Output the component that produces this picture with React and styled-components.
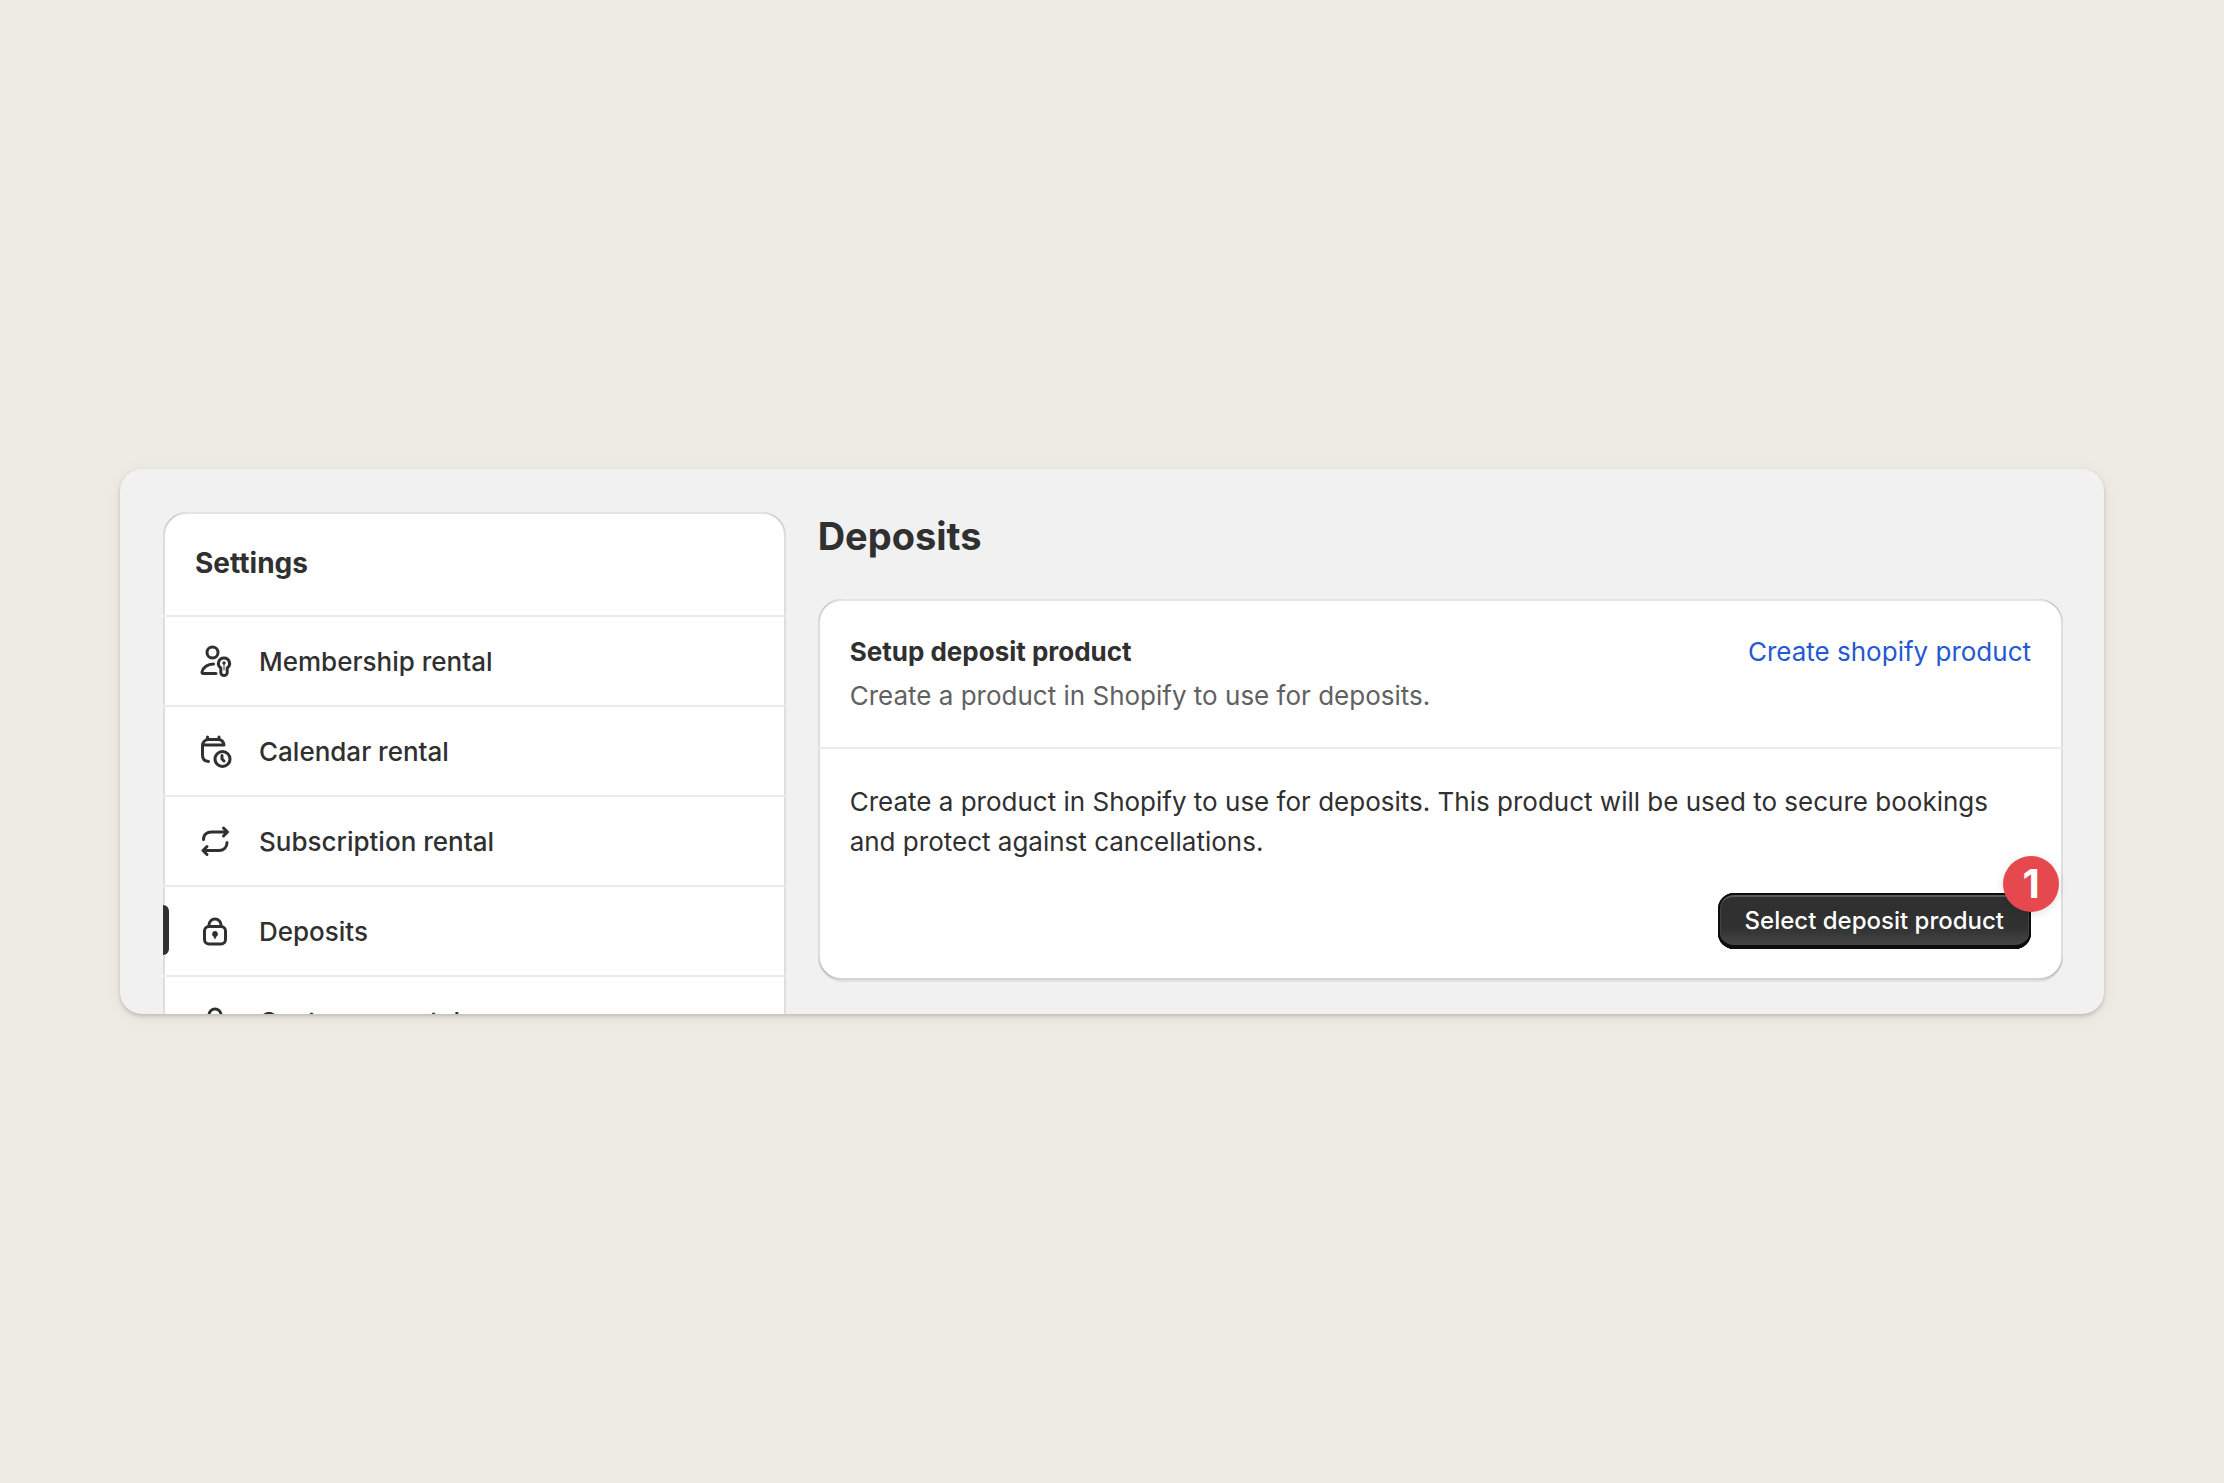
import React from "react"
import styled, { createGlobalStyle } from "styled-components"

const colors = {
  page: "#eeebe3",
  surface: "#f1f1f1",
  text: "#303030",
  subdued: "#616161",
  link: "#2459d3",
  divider: "#ebebeb",
  badge: "#e5484d",
}

const GlobalStyle = createGlobalStyle`
  *,
  *::before,
  *::after {
    box-sizing: border-box;
  }

  body {
    margin: 0;
    background: ${colors.page};
    color: ${colors.text};
    font-family: Inter, "Liberation Sans", sans-serif;
    font-size: 26px;
    line-height: 40px;
    -webkit-font-smoothing: antialiased;
  }

  h1,
  h2,
  p,
  ul {
    margin: 0;
    padding: 0;
  }
`

const StyledPage = styled.div`
  min-height: 100vh;
  padding: 0 120px;
  display: flex;
  align-items: center;
`
const StyledPanel = styled.div`
  flex: 1;
  height: 545px;
  padding: 43px 41px 0 43px;
  display: grid;
  grid-template-columns: 1fr 2fr;
  gap: 32px;
  align-items: start;
  overflow: hidden;
  border-radius: 22px;
  background: ${colors.surface};
  box-shadow: 0 2px 4px rgba(0, 0, 0, 0.18), 0 4px 20px rgba(0, 0, 0, 0.05);
`
const StyledCard = styled.section`
  border-radius: 24px;
  background: #fff;
  box-shadow: inset 2px 0 0 rgba(0, 0, 0, 0.13),
    inset -2px 0 0 rgba(0, 0, 0, 0.13), inset 0 -2px 0 rgba(0, 0, 0, 0.17),
    inset 0 2px 0 rgba(204, 204, 204, 0.5), 0 2px 0 rgba(26, 26, 26, 0.07);
`
const StyledCardTitle = styled.h2`
  font-size: ${({ $large }) => ($large ? "28px" : "26px")};
  font-weight: 700;
`
const StyledSettingsHeader = styled.div`
  padding: 31px 32px 32px;
`
const StyledNav = styled.ul`
  list-style: none;
`
const StyledNavItem = styled.li`
  border-top: 2px solid ${colors.divider};
`
const StyledNavLink = styled.a`
  position: relative;
  height: 88px;
  padding: 2px 31px 0;
  display: flex;
  align-items: center;
  gap: 25px;
  color: inherit;
  font-weight: 500;
  text-decoration: none;

  &[aria-current="page"]::before {
    content: "";
    position: absolute;
    left: 0;
    top: 18px;
    width: 6px;
    height: 50px;
    border-radius: 0 6px 6px 0;
    background: ${colors.text};
  }
`
const StyledIcon = styled.svg`
  flex: none;
  width: 40px;
  height: 40px;
  fill: none;
  stroke: currentColor;
  stroke-width: 3;
  stroke-linecap: round;
  stroke-linejoin: round;
`
const StyledHeading = styled.h1`
  font-size: 38px;
  font-weight: 700;
  line-height: 48px;
  margin-bottom: 39px;
`
const StyledCardHeader = styled.div`
  padding: 33px 32px 31px;
  display: flex;
  justify-content: space-between;
  border-bottom: 2px solid ${colors.divider};
`
const StyledSubtitle = styled.p`
  margin-top: 4px;
  color: ${colors.subdued};
`
const StyledLink = styled.a`
  color: ${colors.link};
  text-decoration: none;
`
const StyledCardBody = styled.div`
  padding: 33px 32px 31px;
`
const StyledActions = styled.div`
  margin-top: 31px;
  display: flex;
  justify-content: flex-end;
`
const StyledButtonWrapper = styled.div`
  position: relative;
`
const StyledButton = styled.button`
  display: block;
  height: 56px;
  padding: 0 27px;
  border: 0;
  border-radius: 16px;
  background: linear-gradient(#303030 60%, #4a4a4a);
  box-shadow: inset 0 0 0 2px #0d0d0d, inset 0 -4px 0 #0d0d0d,
    inset 0 4px 0 #5a5a5a, inset 0 0 0 3px #444;
  color: #fff;
  font: inherit;
  font-size: 24px;
  font-weight: 500;
  cursor: pointer;
`
const StyledBadge = styled.span`
  position: absolute;
  top: -37px;
  right: -28px;
  width: 56px;
  height: 56px;
  display: flex;
  align-items: center;
  justify-content: center;
  border-radius: 50%;
  background: ${colors.badge};
  box-shadow: 0 2px 8px rgba(0, 0, 0, 0.12);
  color: #fff;
  font-size: 40px;
  font-weight: 700;
`

const MembershipIcon = () => (
  <StyledIcon viewBox="0 1 40 40" aria-hidden="true">
    <circle cx="18.500" cy="11.500" r="5.500" />
    <path d="M19.500 23c-6 0-10.500 3.500-11.500 8-.2.900.3 1.500 1.200 1.500H22" />
    <path d="M30 17a5.500 5.500 0 0 0-3.200 10v4.500a3.200 3 0 0 0 6.400 0V27A5.500 5.500 0 0 0 30 17z" />
    <circle cx="30" cy="22" r="1.700" fill="currentColor" stroke="none" />
    <path d="M30 23v6" strokeWidth="1" />
  </StyledIcon>
)

const CalendarIcon = () => (
  <StyledIcon viewBox="0 2 40 40" aria-hidden="true">
    <path d="M14.500 31.500c-4-.2-6-2.700-6-6.500v-9.500a6 6 0 0 1 6-6H24c3.500 0 5.500 2 6 5.500H9M13.500 9V7M25 9V7" />
    <circle cx="28.500" cy="29" r="7.500" />
    <path d="M28 25.500v3.500l2 2" />
  </StyledIcon>
)

const SubscriptionIcon = () => (
  <StyledIcon viewBox="0 1 40 40" aria-hidden="true">
    <path d="M9.500 18.500c0-5 3.500-7.500 8-7.500h16M29.500 7l4 4-4 4" />
    <path d="M33 21.500c0 5-3.500 8-8 8H9M13 25.500l-4 4 4 4" />
  </StyledIcon>
)

const LockIcon = () => (
  <StyledIcon viewBox="0 1 40 40" aria-hidden="true">
    <rect x="10.500" y="15.500" width="21" height="17.500" rx="4.500" />
    <path d="M15 15v-1a6 6 0 0 1 12 0v1" />
    <path
      d="M21 20a3 3 0 0 0-1.600 5.500L21 28.500l1.600-3A3 3 0 0 0 21 20z"
      fill="currentColor"
      stroke="none"
    />
  </StyledIcon>
)

const navItems = [
  { label: "Membership rental", Icon: MembershipIcon },
  { label: "Calendar rental", Icon: CalendarIcon },
  { label: "Subscription rental", Icon: SubscriptionIcon },
  { label: "Deposits", Icon: LockIcon, current: true },
  { label: "Customer portal", Icon: LockIcon },
]

const SettingsNav = () => (
  <StyledCard as="nav" aria-label="Settings">
    <StyledSettingsHeader>
      <StyledCardTitle $large>Settings</StyledCardTitle>
    </StyledSettingsHeader>
    <StyledNav>
      {navItems.map(({ label, Icon, current }) => (
        <StyledNavItem key={label}>
          <StyledNavLink href="#" aria-current={current ? "page" : undefined}>
            <Icon />
            {label}
          </StyledNavLink>
        </StyledNavItem>
      ))}
    </StyledNav>
  </StyledCard>
)

const DepositCard = () => (
  <StyledCard>
    <StyledCardHeader>
      <div>
        <StyledCardTitle>Setup deposit product</StyledCardTitle>
        <StyledSubtitle>
          Create a product in Shopify to use for deposits.
        </StyledSubtitle>
      </div>
      <StyledLink href="#">Create shopify product</StyledLink>
    </StyledCardHeader>
    <StyledCardBody>
      <p>
        Create a product in Shopify to use for deposits. This product will be
        used to secure bookings and protect against cancellations.
      </p>
      <StyledActions>
        <StyledButtonWrapper>
          <StyledButton type="button">Select deposit product</StyledButton>
          <StyledBadge>1</StyledBadge>
        </StyledButtonWrapper>
      </StyledActions>
    </StyledCardBody>
  </StyledCard>
)

const App = () => (
  <>
    <GlobalStyle />
    <StyledPage>
      <StyledPanel>
        <SettingsNav />
        <main>
          <StyledHeading>Deposits</StyledHeading>
          <DepositCard />
        </main>
      </StyledPanel>
    </StyledPage>
  </>
)

export default App
